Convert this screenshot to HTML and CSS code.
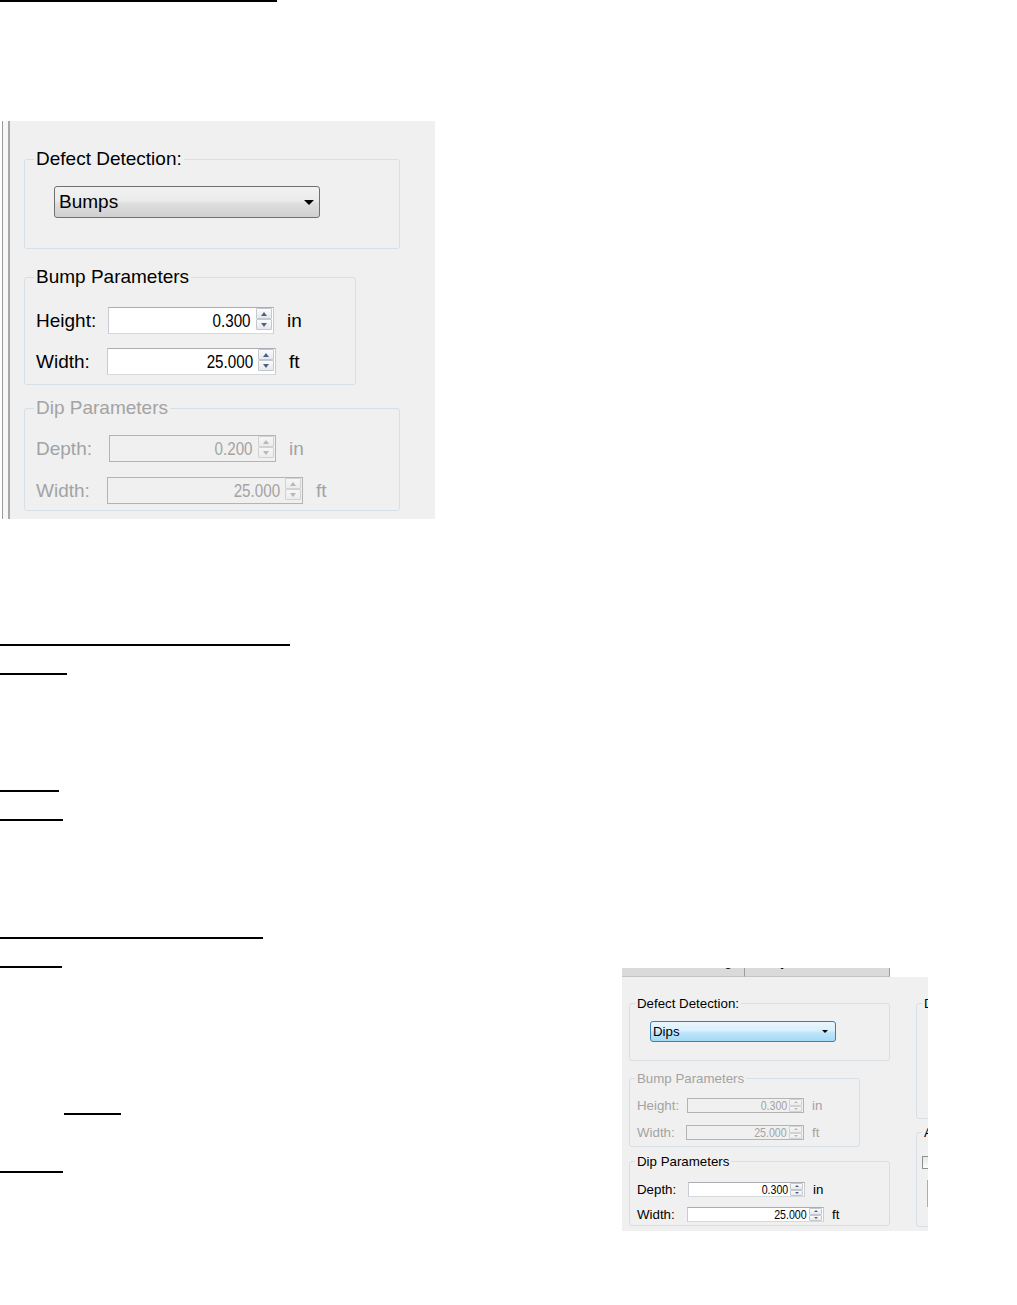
FILE: index.html
```html
<!DOCTYPE html>
<html>
	<head>
		<meta charset="utf-8">
		<title>Defect Detection</title>
		<link rel="stylesheet" href="styles.css">
	</head>
	<body>
	<div class="rule r-a"></div>

	<!--大图-->
	<div class="shot-big">
		<fieldset class="grp g-detect">
			<legend>Defect Detection:</legend>
			<div class="combo"><span>Bumps</span><i class="arrow"></i></div>
		</fieldset>
		<fieldset class="grp g-bump">
			<legend>Bump Parameters</legend>
			<div class="row f-height">
				<span class="lbl">Height:</span>
				<span class="spin"><span class="val">0.300</span><span class="btns"><b class="up"></b><b class="dn"></b></span></span>
				<span class="unit">in</span>
			</div>
			<div class="row f-width">
				<span class="lbl">Width:</span>
				<span class="spin"><span class="val">25.000</span><span class="btns"><b class="up"></b><b class="dn"></b></span></span>
				<span class="unit">ft</span>
			</div>
		</fieldset>
		<fieldset class="grp g-dip off">
			<legend>Dip Parameters</legend>
			<div class="row f-depth">
				<span class="lbl">Depth:</span>
				<span class="spin"><span class="val">0.200</span><span class="btns"><b class="up"></b><b class="dn"></b></span></span>
				<span class="unit">in</span>
			</div>
			<div class="row f-dwidth">
				<span class="lbl">Width:</span>
				<span class="spin"><span class="val">25.000</span><span class="btns"><b class="up"></b><b class="dn"></b></span></span>
				<span class="unit">ft</span>
			</div>
		</fieldset>
	</div>

	<div class="rule r-b"></div>
	<div class="rule r-c"></div>
	<div class="rule r-d"></div>
	<div class="rule r-e"></div>
	<div class="rule r-f"></div>

	<div class="lower">
		<div class="notes">
			<div class="rule r-g"></div>
			<div class="rule r-h"></div>
			<div class="rule r-i"></div>
		</div>

		<!--小图-->
		<div class="shot-small">
			<div class="tabs">
				<div class="tab t1"><span>Processing</span></div>
				<div class="tab t2"><span>Analysis</span></div>
			</div>
			<div class="panel">
				<div class="col-main">
					<fieldset class="grp g-detect">
						<legend>Defect Detection:</legend>
						<div class="combo hot"><span>Dips</span><i class="arrow"></i></div>
					</fieldset>
					<fieldset class="grp g-bump off">
						<legend>Bump Parameters</legend>
						<div class="row f-height">
							<span class="lbl">Height:</span>
							<span class="spin"><span class="val">0.300</span><span class="btns"><b class="up"></b><b class="dn"></b></span></span>
							<span class="unit">in</span>
						</div>
						<div class="row f-width">
							<span class="lbl">Width:</span>
							<span class="spin"><span class="val">25.000</span><span class="btns"><b class="up"></b><b class="dn"></b></span></span>
							<span class="unit">ft</span>
						</div>
					</fieldset>
					<fieldset class="grp g-dip">
						<legend>Dip Parameters</legend>
						<div class="row f-depth">
							<span class="lbl">Depth:</span>
							<span class="spin"><span class="val">0.300</span><span class="btns"><b class="up"></b><b class="dn"></b></span></span>
							<span class="unit">in</span>
						</div>
						<div class="row f-dwidth">
							<span class="lbl">Width:</span>
							<span class="spin"><span class="val">25.000</span><span class="btns"><b class="up"></b><b class="dn"></b></span></span>
							<span class="unit">ft</span>
						</div>
					</fieldset>
				</div>
				<div class="col-side">
					<fieldset class="grp g-disp">
						<legend>Display</legend>
						<div class="blank"></div>
					</fieldset>
					<fieldset class="grp g-alarm">
						<legend>Alarm</legend>
						<div class="check"></div>
						<div class="field"></div>
					</fieldset>
				</div>
			</div>
		</div>
	</div>
	</body>
</html>
```

FILE: styles.css
```css
*{margin:0;padding:0;box-sizing:border-box;}
body{background:#fff;font-family:"Liberation Sans",Arial,sans-serif;color:#000;}
/*下划线*/
.rule{height:2px;background:#000;}
.r-a{width:277px;}
.r-b{width:290px;margin-top:125px;}
.r-c{width:67px;margin-top:27px;}
.r-d{width:59px;margin-top:115px;}
.r-e{width:63px;margin-top:27px;}
.r-f{width:263px;margin-top:116px;}
.r-g{width:62px;margin-top:27px;}
.r-h{width:57px;margin:145px 0 0 64px;}
.r-i{width:63px;margin-top:56px;}
.lower{display:flex;}
.notes{width:622px;flex:none;}

/*通用控件*/
.grp{border:1px solid #d5dfe5;border-radius:3px;min-width:0;}
.grp legend{padding:0 2px;}
.off{color:#a3a3a3;}
.row{display:flex;align-items:center;}
.lbl{flex:none;}
.spin{display:flex;align-items:flex-start;justify-content:flex-end;flex:none;background:#fff;border:1px solid #abadb3;border-color:#abadb3 #c8cbd2 #d5d9de #c8cbd2;}
.spin .val{align-self:center;display:inline-block;transform:scaleX(.8);transform-origin:right center;white-space:nowrap;}
.btns{display:flex;flex-direction:column;flex:none;}
.btns b{flex:1;position:relative;border:1px solid #c3c7ce;border-radius:1px;background:linear-gradient(#fbfbfb,#e6e8ec);}
.btns b::after{content:"";position:absolute;left:50%;top:50%;border-left:3px solid transparent;border-right:3px solid transparent;}
.btns .up::after{border-bottom:4px solid #4b6286;margin:-2px 0 0 -3px;}
.btns .dn::after{border-top:4px solid #4b6286;margin:-2px 0 0 -3px;}
.off .spin{background:#f0f0f0;border-color:#b4b4b4;}
.off .btns b{border-color:#d2d2d2;background:linear-gradient(#f6f6f6,#ececec);}
.off .btns .up::after{border-bottom-color:#b8b8b8;}
.off .btns .dn::after{border-top-color:#b8b8b8;}
.combo{display:flex;align-items:center;justify-content:space-between;border:1px solid #707070;border-radius:3px;background:linear-gradient(#f2f2f2,#ebebeb 45%,#dedede 55%,#d0d0d0);}
.combo .arrow{border-left:5px solid transparent;border-right:5px solid transparent;border-top:5px solid #000;}
.combo.hot{border-color:#3c7fb1;background:linear-gradient(#eaf6fd,#d9f0fc 45%,#bee6fd 55%,#a7d9f5);}

/*大图*/
.shot-big{width:433px;height:398px;margin:119px 0 0 2px;overflow:hidden;font-size:19px;background:linear-gradient(to right,#9a9a9a 0 1px,#f7f7f7 1px 6px,#a8a8a8 6px 8px,#f0f0f0 8px);}
.shot-big .grp{margin-left:22px;}
.shot-big legend{margin-left:9px;line-height:22px;}
.shot-big .g-detect{width:376px;margin-top:27px;padding:16px 0 30px;}
.shot-big .g-bump{width:332px;margin-top:17px;padding:19px 0 9px;}
.shot-big .g-dip{width:376px;margin-top:12px;padding:16px 0 6px;}
.shot-big .combo{width:266px;height:32px;margin-left:29px;padding:0 5px 0 4px;}
.shot-big .row{padding-left:11px;}
.shot-big .g-bump .row + .row{margin-top:14px;}
.shot-big .g-dip .row + .row{margin-top:15px;}
.shot-big .spin{height:27px;}
.shot-big .val{margin-right:5px;}
.shot-big .btns{width:16px;height:22px;margin-right:1px;}
.shot-big .unit{margin-left:13px;}
.shot-big .f-height .lbl{width:72px;}
.shot-big .f-height .spin{width:166px;}
.shot-big .f-width .lbl{width:71px;}
.shot-big .f-width .spin{width:169px;}
.shot-big .f-depth .lbl{width:73px;}
.shot-big .f-depth .spin{width:167px;}
.shot-big .f-dwidth .lbl{width:71px;}
.shot-big .f-dwidth .spin{width:196px;}

/*小图*/
.shot-small{width:306px;flex:none;margin-top:29px;font-size:13.3px;}
.tabs{display:flex;width:268px;height:9px;}
.tab{overflow:hidden;height:9px;background:#dadada;border-right:1px solid #9c9c9c;border-bottom:1px solid #c4c4c4;}
.tab span{display:block;line-height:15px;margin-top:-14px;white-space:nowrap;}
.t1{width:123px;text-align:right;padding-right:12px;}
.t2{width:145px;padding-left:9px;}
.panel{display:flex;height:254px;background:#f0f0f0;overflow:hidden;}
.col-main{width:261px;margin-left:7px;flex:none;}
.col-side{width:140px;margin-left:26px;flex:none;}
.shot-small legend{margin-left:5px;line-height:15px;}
.shot-small .g-detect{margin-top:19px;padding:10px 0 18px;}
.shot-small .g-bump{width:231px;margin-top:10px;padding:12px 0 6px;}
.shot-small .g-dip{margin-top:7px;padding:13px 0 3px;}
.shot-small .combo{width:186px;height:21px;margin-left:20px;padding:0 7px 0 2px;}
.shot-small .combo .arrow{border-left-width:3px;border-right-width:3px;border-top-width:3px;}
.shot-small .row{padding-left:7px;}
.shot-small .g-bump .row + .row{margin-top:12px;}
.shot-small .g-dip .row + .row{margin-top:10px;}
.shot-small .spin{height:15px;}
.shot-small .val{margin-right:2px;}
.shot-small .btns{width:13px;height:13px;margin-right:1px;}
.shot-small .btns b::after{border-left-width:2px;border-right-width:2px;margin-left:-2px;}
.shot-small .btns .up::after{border-bottom-width:2px;margin-top:-1px;}
.shot-small .btns .dn::after{border-top-width:2px;margin-top:-1px;}
.shot-small .unit{margin-left:8px;}
.shot-small .f-height .lbl{width:50px;}
.shot-small .f-height .spin{width:117px;}
.shot-small .f-width .lbl{width:49px;}
.shot-small .f-width .spin{width:118px;}
.shot-small .f-depth .lbl{width:51px;}
.shot-small .f-depth .spin{width:117px;}
.shot-small .f-dwidth .lbl{width:50px;}
.shot-small .f-dwidth .spin{width:137px;}
.g-disp{margin-top:19px;}
.g-disp .blank{height:107px;}
.g-alarm{margin-top:6px;padding-bottom:19px;}
.g-alarm .check{width:13px;height:13px;margin:16px 0 0 5px;border:1px solid #8e8f8f;background:linear-gradient(#e6e6e6,#fcfcfc);}
.g-alarm .field{width:80px;height:27px;margin:11px 0 0 10px;border:1px solid #adadad;background:#f6f6f6;}
```
